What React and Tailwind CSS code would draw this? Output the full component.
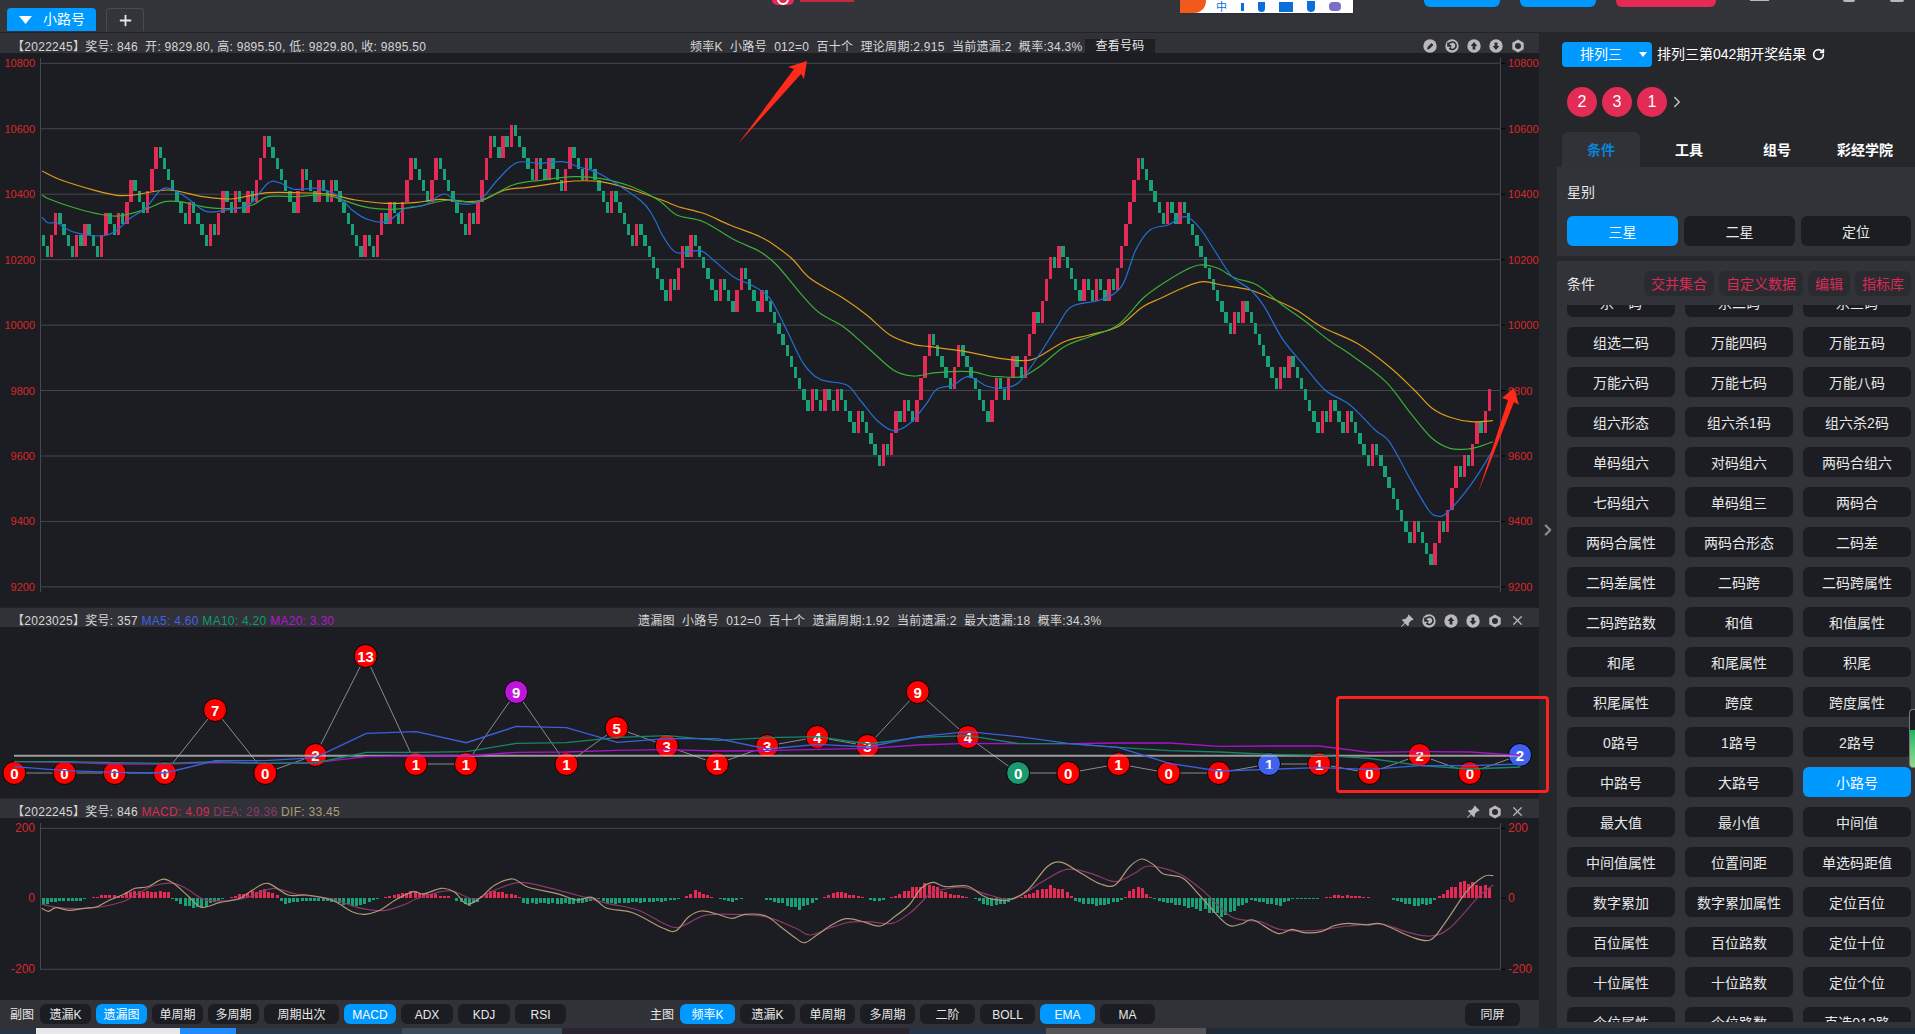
import { ChevronRight, Plus, RotateCw, X } from "lucide-react";
import { BsPinAngleFill } from "react-icons/bs";

// points were read off at different x scales, so every series gets rescaled to page coordinates
const toPage = (pts, sx, ox, oy) => pts.map(([x, y]) => [ox + x / sx, oy + y / 3]);

const PRICE_PATH = [
  ...toPage([[110,405],[118,478],[130,408],[145,345],[158,400],[178,482],[188,480],[205,385],[218,385],[225,450],[235,390],[245,388],[252,455],[270,325],[280,325],[298,428],[310,365],[322,295],[328,235],[340,235],[350,300],[360,240],[378,305],[385,238],[395,175],[410,145],[425,145],[443,245],[460,315],[480,380],[495,315],[520,450],[530,450],[548,320],[568,390],[580,290],[595,360],[610,262],[620,262],[640,330],[660,235],[668,170],[680,105],[690,105],[720,240],[745,340],[757,340],[775,245],[790,215],[805,215],[822,315],[838,250],[855,320],[870,255],[895,390],[920,458],[930,390],[945,460],[955,392],[972,430],[985,335],[1005,400],[1025,270],[1045,340],[1070,210],[1080,210],[1110,345],[1130,215],[1150,185],[1160,185],[1190,320],[1215,420],[1225,355],[1250,260],[1260,130],[1290,100],[1295,100],[1305,165],[1325,100],[1335,72],[1345,72],[1365,170],[1385,240],[1410,145],[1425,210],[1445,150],[1465,215],[1480,150],[1500,220],[1510,285],[1525,157],[1540,190],[1565,290]], 2.613, 0, 100),
  ...toPage([[130,60],[145,0],[185,0],[215,98],[220,35],[232,35],[275,205],[305,305],[320,238],[338,305],[360,178],[373,112],[388,112],[395,180],[407,115],[420,115],[430,180],[465,285],[472,220],[480,220],[515,355],[527,290],[535,225],[548,225],[582,360],[592,295],[605,295],[640,430],[690,600],[740,733],[745,670],[755,605],[765,605],[790,575],[800,545],[808,545],[820,610],[830,548],[840,548],[885,715],[895,650],[907,650],[950,820],[960,755],[975,755],[983,725],[1000,690],[1015,630],[1030,630],[1040,660],[1060,595],[1070,505],[1082,505],[1090,470],[1102,405],[1115,405],[1140,510],[1155,575],[1168,510],[1190,480],[1210,448],[1222,448],[1255,585],[1277,650],[1290,585],[1297,520],[1310,520],[1330,622],[1343,558],[1355,492],[1365,492],[1385,560],[1385,495],[1395,430],[1408,365],[1418,365],[1430,340],[1442,270],[1450,208],[1478,175],[1495,145]], 3, 560, 200),
  ...toPage([[168,355],[185,420],[205,520],[225,462],[235,460],[250,525],[255,462],[270,465],[283,530],[297,465],[325,470],[330,405],[345,275],[375,80],[388,80],[440,285],[458,315],[470,190],[480,190],[492,255],[503,190],[510,190],[560,390],[610,560],[635,625],[645,565],[665,532],[685,502],[692,502],[735,670],[770,805],[785,740],[800,710],[812,710],[850,875],[865,815],[875,815],[895,915],[905,850],[925,820],[937,820],[958,920],[965,855],[975,855],[1005,990],[1020,925],[1030,990],[1040,960],[1055,1025],[1070,965],[1085,1060],[1140,1265],[1160,1200],[1170,1200],[1200,1335],[1212,1335],[1222,1205],[1232,1140],[1250,1175],[1262,1050],[1272,985],[1280,1015],[1295,950],[1310,985],[1320,855],[1332,855],[1345,925],[1350,860],[1362,795],[1372,795],[1383,860]], 2.8, 1000, 130),
];

const MA_ORANGE = [
  ...toPage([[110,213],[160,240],[250,272],[305,286],[350,285],[440,270],[530,290],[600,297],[640,290],[700,278],[770,278],[860,283],[930,300],[1010,310],[1090,307],[1150,298],[1220,305],[1260,300],[1320,270],[1380,262],[1450,250],[1500,243],[1568,245]], 2.613, 0, 100),
  [630, 189],
  ...toPage([[305,0],[355,20],[430,40],[510,75],[600,110],[650,140],[700,180],[750,235],[850,295],[920,345],[990,405],[1060,433],[1110,440],[1200,452],[1290,470]], 3, 560, 200),
  ...toPage([[0,685],[60,692],[100,685],[180,635],[250,615],[330,590],[400,530],[450,505],[520,470],[570,455],[620,465],[700,480],[760,505],[830,540],[900,590],[1000,640],[1090,710],[1160,780],[1210,835],[1260,862],[1320,875],[1380,872]], 2.8, 1000, 130),
];
const MA_GREEN = [
  ...toPage([[110,285],[130,298],[190,322],[250,340],[310,348],[380,328],[430,305],[470,305],[540,322],[610,325],[660,315],[700,290],[770,290],[830,285],[870,290],[950,320],[1020,328],[1090,320],[1170,300],[1250,305],[1340,255],[1420,240],[1500,230],[1568,235]], 2.613, 0, 100),
  [630, 186],
  ...toPage([[295,0],[350,45],[430,65],[520,118],[600,155],[650,195],[730,290],[780,340],[850,380],[920,440],[1000,510],[1060,528],[1130,518],[1230,515],[1290,528]], 3, 560, 200),
  ...toPage([[0,740],[60,740],[110,710],[180,650],[250,620],[330,585],[400,505],[450,465],[520,420],[560,405],[610,415],[660,445],[720,465],[790,525],[850,570],[920,630],[990,680],[1080,755],[1150,850],[1210,925],[1260,955],[1310,957],[1350,947],[1380,935]], 2.8, 1000, 130),
];
const MA_BLUE = [
  ...toPage([[110,352],[125,368],[150,370],[190,395],[260,408],[300,395],[340,355],[380,325],[420,270],[450,268],[490,295],[540,335],[600,328],[650,315],[700,250],[730,248],[770,268],[830,265],[880,285],[920,330],[960,358],[1010,365],[1060,325],[1110,315],[1160,282],[1200,310],[1250,305],[1300,240],[1350,188],[1410,190],[1470,185],[1510,200],[1568,222]], 2.613, 0, 100),
  ...toPage([[240,0],[280,50],[310,110],[350,158],[420,152],[460,180],[520,230],[580,258],[630,295],[680,390],[730,490],[780,538],[860,555],[900,600],[950,660],[1000,692],[1050,670],[1100,610],[1130,568],[1180,555],[1225,530],[1280,558]], 3, 560, 200),
  ...toPage([[0,775],[50,760],[100,690],[160,590],[200,530],[280,510],[340,470],[380,360],[420,300],[470,285],[520,260],[560,295],[600,360],[650,440],[700,478],[740,530],[790,625],[850,705],[910,780],[980,825],[1050,900],[1090,935],[1150,1050],[1200,1140],[1225,1158],[1250,1150],[1300,1090],[1340,1030],[1380,960]], 2.8, 1000, 130),
];

const NODE_VALUES = [0,0,0,0,7,0,2,13,1,1,9,1,5,3,1,3,4,3,9,4,0,0,1,0,0,1,1,0,2,0,2];
const NODE_COLORS = { 10: "#c014dc", 20: "#1a9a6e", 25: "#4060f0", 30: "#4060f0" };
const LOSS_BLUE = [
  ...toPage([[28,500],[128,512],[226,517],[324,519],[422,482],[520,482],[618,473],[718,400],[816,395],[914,428],[1012,379],[1110,383],[1210,427],[1308,416],[1406,416],[1504,447]], 1.96, 0, 600),
  ...toPage([[36,433],[141,441],[244,410],[347,395],[451,410],[553,430],[656,442],[762,490],[865,513],[968,508],[1071,503],[1175,508],[1280,497],[1383,497],[1486,492]], 2.063, 800, 600),
];
const LOSS_GREEN = [
  ...toPage([[28,485],[128,485],[226,488],[324,490],[422,485],[520,490],[618,489],[718,457],[816,457],[914,455],[1012,430],[1110,428],[1210,412],[1308,407],[1406,421],[1504,413]], 1.96, 0, 600),
  ...toPage([[36,410],[141,432],[244,412],[347,407],[451,431],[553,431],[656,442],[762,452],[865,456],[968,463],[1071,466],[1175,475],[1280,497],[1383,507],[1486,501]], 2.063, 800, 600),
];
const LOSS_PURPLE = [
  ...toPage([[28,485],[128,487],[226,492],[324,492],[422,488],[520,490],[618,488],[718,470],[816,468],[914,468],[1012,457],[1110,456],[1210,451],[1308,449],[1406,453],[1504,452]], 1.96, 0, 600),
  ...toPage([[36,448],[141,445],[244,435],[347,430],[451,431],[553,431],[656,429],[762,429],[865,439],[968,438],[1071,438],[1175,457],[1280,455],[1383,456],[1486,466]], 2.063, 800, 600),
];

const DIF = [
  ...toPage([[82,325],[95,334],[110,323],[135,331],[165,325],[190,320],[215,300],[240,285],[265,265],[290,260],[318,238],[340,250],[370,290],[395,322],[430,308],[470,295],[495,270],[525,250],[565,285],[600,285],[650,300],[690,335],[715,343],[745,330],[775,300],[810,275],[830,282],[865,265],[890,275],[915,312],[940,295],[970,255],[1005,237],[1035,262],[1090,280],[1130,300],[1160,292],[1190,325],[1240,338],[1300,385],[1325,392],[1350,350],[1375,333],[1405,342],[1435,355],[1460,343],[1500,347],[1530,380],[1560,415]], 1.96, 0, 800),
  ...toPage([[10,428],[35,405],[65,375],[95,356],[125,363],[165,378],[195,350],[225,315],[250,265],[275,247],[300,260],[345,258],[375,285],[395,297],[430,300],[470,270],[510,200],[540,187],[580,220],[620,252],[650,255],[680,200],[705,177],[730,195],[750,222],[790,235],[830,295],[880,372],[910,372],[935,360],[985,400],[1015,388],[1040,398],[1075,395],[1100,378],[1130,370],[1170,375],[1200,372],[1260,410],[1300,420],[1330,370],[1375,275],[1410,230],[1430,227]], 2.063, 800, 800),
];
const DEA = [
  ...toPage([[82,312],[110,322],[150,326],[190,322],[240,305],[265,285],[300,258],[340,250],[370,270],[400,298],[450,302],[490,290],[535,265],[580,282],[650,297],[700,322],[750,332],[790,315],[820,295],[880,272],[930,298],[970,270],[1020,247],[1080,265],[1130,285],[1190,310],[1250,330],[1300,370],[1330,382],[1380,347],[1430,343],[1500,350],[1560,385]], 1.96, 0, 800),
  ...toPage([[20,405],[60,385],[100,367],[140,365],[190,370],[230,335],[270,280],[300,267],[340,262],[390,285],[440,297],[500,245],[550,208],[600,220],[650,245],[690,220],[720,198],[780,220],[830,270],[890,350],[950,365],[990,388],[1060,392],[1130,378],[1200,372],[1250,395],[1300,408],[1340,385],[1400,290],[1430,255]], 2.063, 800, 800),
];
const MACD_ENVELOPE = [
  ...[[80,-20],[110,-8],[150,-8],[170,0],[210,12],[235,5],[250,20],[330,18],[335,-2],[365,-25],[395,-25],[430,-3],[460,8],[515,25],[545,5],[550,-15],[600,-8],[640,-8],[680,-20],[700,-22],[740,0],[770,10],[800,20],[880,5],[890,-5],[915,-22],[935,-8],[945,15],[970,22],[1015,5],[1025,-15],[1100,-15],[1130,-15],[1170,-3],[1190,-15],[1300,-8],[1335,0],[1360,22],[1395,3],[1430,-10],[1460,3],[1490,0],[1530,-15],[1560,-30]].map(([x, h]) => [x / 1.96, h / 3]),
  ...[[0,-28],[25,-10],[40,0],[75,20],[105,10],[130,2],[150,-10],[185,2],[230,30],[265,42],[300,15],[340,3],[355,0],[385,-22],[420,-15],[440,0],[465,10],[515,35],[550,20],[560,0],[570,-12],[620,-22],[665,-3],[675,18],[695,35],[720,5],[735,-8],[800,-25],[875,-50],[910,-18],[930,-5],[985,-22],[1010,-3],[1060,-3],[1075,0],[1100,8],[1140,8],[1180,0],[1210,0],[1260,-22],[1300,-15],[1310,0],[1340,30],[1365,48],[1430,28]].map(([x, h]) => [800 + x / 2.063, h / 3]),
];

const BAR_STEP = 4.18;
const BAR_COUNT = 347;

function interp(pts, x) {
  if (x <= pts[0][0]) return pts[0][1];
  for (let i = 1; i < pts.length; i++) {
    if (x <= pts[i][0]) {
      const [x0, y0] = pts[i - 1];
      const [x1, y1] = pts[i];
      return x1 === x0 ? y1 : y0 + ((y1 - y0) * (x - x0)) / (x1 - x0);
    }
  }
  return pts[pts.length - 1][1];
}

// catmull-rom through the points
function smooth(pts) {
  let d = `M${pts[0][0].toFixed(1)} ${pts[0][1].toFixed(1)}`;
  for (let i = 0; i < pts.length - 1; i++) {
    const p0 = pts[Math.max(i - 1, 0)];
    const p1 = pts[i];
    const p2 = pts[i + 1];
    const p3 = pts[Math.min(i + 2, pts.length - 1)];
    const c1x = p1[0] + (p2[0] - p0[0]) / 6;
    const c1y = p1[1] + (p2[1] - p0[1]) / 6;
    const c2x = p2[0] - (p3[0] - p1[0]) / 6;
    const c2y = p2[1] - (p3[1] - p1[1]) / 6;
    d += `C${c1x.toFixed(1)} ${c1y.toFixed(1)} ${c2x.toFixed(1)} ${c2y.toFixed(1)} ${p2[0].toFixed(1)} ${p2[1].toFixed(1)}`;
  }
  return d;
}

// hit = +2 (red), miss = -1 (green), steered along the price path
function buildCandles() {
  const out = [];
  let y = 235;
  for (let i = 0; i < BAR_COUNT; i++) {
    const x = 41.5 + i * BAR_STEP;
    const target = interp(PRICE_PATH, x + 1);
    if (y - target > 9) {
      out.push({ x, y: y - 22, h: 22, up: true });
      y -= 22;
    } else {
      out.push({ x, y, h: 11, up: false });
      y += 11;
    }
  }
  return out;
}

const priceY = (v) => 63.3 + ((10800 - v) / 200) * 65.45;
const PRICE_TICKS = [10800, 10600, 10400, 10200, 10000, 9800, 9600, 9400, 9200];

const CONDITIONS = [
  ["杀一码", "杀二码", "杀三码"],
  ["组选二码", "万能四码", "万能五码"],
  ["万能六码", "万能七码", "万能八码"],
  ["组六形态", "组六杀1码", "组六杀2码"],
  ["单码组六", "对码组六", "两码合组六"],
  ["七码组六", "单码组三", "两码合"],
  ["两码合属性", "两码合形态", "二码差"],
  ["二码差属性", "二码跨", "二码跨属性"],
  ["二码跨路数", "和值", "和值属性"],
  ["和尾", "和尾属性", "积尾"],
  ["积尾属性", "跨度", "跨度属性"],
  ["0路号", "1路号", "2路号"],
  ["中路号", "大路号", "小路号"],
  ["最大值", "最小值", "中间值"],
  ["中间值属性", "位置间距", "单选码距值"],
  ["数字累加", "数字累加属性", "定位百位"],
  ["百位属性", "百位路数", "定位十位"],
  ["十位属性", "十位路数", "定位个位"],
  ["个位属性", "个位路数", "直选012路"],
].flat();

function RoundIcon({ kind }) {
  const glyph = {
    edit: <path d="M4 10.5l.6-2.4 4-4 1.8 1.8-4 4z" fill="#2a2b30" />,
    back: <path d="M3.5 6.5a3.8 3.8 0 1 1 1.4 3.2l1-1.2 M3 3.5v3.4h3.4" fill="none" stroke="#2a2b30" strokeWidth="1.6" />,
    up: <path d="M7 3l3.4 4H8.4v3.6H5.6V7H3.6z" fill="#2a2b30" />,
    down: <path d="M7 11L3.6 7h2V3.4h2.8V7h2z" fill="#2a2b30" />,
  }[kind];
  if (kind === "nut") {
    return (
      <svg width="14" height="14" viewBox="0 0 14 14">
        <path d="M7 .5l5.7 3.2v6.6L7 13.5 1.3 10.3V3.7z" fill="#b9b9b9" />
        <circle cx="7" cy="7" r="3" fill="#2a2b30" />
      </svg>
    );
  }
  return (
    <svg width="14" height="14" viewBox="0 0 14 14">
      <circle cx="7" cy="7" r="6.7" fill="#b9b9b9" />
      {glyph}
    </svg>
  );
}

function PanelHeader({ children, icons, close, tall }) {
  return (
    <div className={`flex items-center flex-none border-t border-[#222327] bg-[#313237] pt-[6px] pr-[14px] text-[12px] leading-[14px] tracking-[0.28px] text-[#d6d6d6] ${tall ? "h-[21px]" : "h-[20px]"}`}>
      {children}
      <div className="ml-auto flex items-center gap-[8px]">
        {icons.map((k) =>
          k === "pin" ? (
            <BsPinAngleFill key={k} className="text-[#b9b9b9]" size={14} />
          ) : (
            <RoundIcon key={k} kind={k} />
          )
        )}
        {close && <X className="text-[#b9b9b9]" size={15} strokeWidth={2} />}
      </div>
    </div>
  );
}

function ToolButton({ label, active, className }) {
  return (
    <div className={`flex h-[20px] items-center justify-center rounded-md pt-[2px] text-[12px] text-[#e8e8e8] ${active ? "bg-[#0099ff] text-white" : "bg-[#1c1d22]"} ${className}`}>
      {label}
    </div>
  );
}

function PriceChart() {
  const candles = buildCandles();
  return (
    <svg className="block flex-none" width="1539" height="554" viewBox="0 53 1539 554">
      {PRICE_TICKS.map((v) => (
        <g key={v}>
          <line x1="41" x2="1501" y1={priceY(v)} y2={priceY(v)} stroke="#47484d" />
          <line x1="1501" x2="1505" y1={priceY(v)} y2={priceY(v)} stroke="#000" />
          <text x="35" y={priceY(v) + 4} textAnchor="end" fontSize="11" fill="#d8282a">{v}</text>
          <text x="1508" y={priceY(v) + 4} fontSize="11" fill="#d8282a">{v}</text>
        </g>
      ))}
      <line x1="40.5" x2="40.5" y1="58" y2="592" stroke="#47484d" />
      <line x1="1500.5" x2="1500.5" y1="58" y2="592" stroke="#47484d" />
      {candles.map((c, i) => (
        <rect key={i} x={c.x} y={c.y} width="3.4" height={c.h} fill={c.up ? "#e42a55" : "#18a177"} shapeRendering="crispEdges" />
      ))}
      <path d={smooth(MA_ORANGE)} fill="none" stroke="#dc9c1c" strokeWidth="1.2" />
      <path d={smooth(MA_GREEN)} fill="none" stroke="#3aaf36" strokeWidth="1.2" />
      <path d={smooth(MA_BLUE)} fill="none" stroke="#2070d8" strokeWidth="1.2" />
    </svg>
  );
}

function LossChart() {
  const nodes = NODE_VALUES.map((v, i) => ({
    v,
    x: 14.3 + i * 50.19,
    y: 773 - v * 9,
    fill: NODE_COLORS[i] || "#ff0000",
  }));
  return (
    <svg className="block flex-none" width="1539" height="171" viewBox="0 627 1539 171">
      <polyline points={nodes.map((n) => `${n.x},${n.y}`).join(" ")} fill="none" stroke="#8b8b8b" />
      {nodes.map((n, i) => (
        <g key={i}>
          <circle cx={n.x} cy={n.y} r="11.5" fill={n.fill} stroke="#000" />
          <text x={n.x} y={n.y + 5.5} textAnchor="middle" fontSize="15" fontWeight="700" fill="#fff">{n.v}</text>
        </g>
      ))}
      <line x1="14" x2="1520" y1="755.7" y2="755.7" stroke="#bdbdbd" strokeWidth="2" strokeOpacity="0.8" />
      <polyline points={LOSS_PURPLE.map((p) => p.join(",")).join(" ")} fill="none" stroke="#a813c8" strokeWidth="1.4" />
      <polyline points={LOSS_GREEN.map((p) => p.join(",")).join(" ")} fill="none" stroke="#14876a" strokeWidth="1.4" />
      <polyline points={LOSS_BLUE.map((p) => p.join(",")).join(" ")} fill="none" stroke="#3a60e0" strokeWidth="1.4" />
    </svg>
  );
}

function MacdChart() {
  const bars = [];
  for (let i = 0; i < BAR_COUNT; i++) {
    const x = 41.5 + i * BAR_STEP;
    const h = interp(MACD_ENVELOPE, x) * (1.05 + 0.12 * Math.sin(i * 2.3));
    if (Math.abs(h) >= 0.5) bars.push({ x, h });
  }
  return (
    <svg className="block flex-none" width="1539" height="182" viewBox="0 818 1539 182">
      {[[200, 828.3], [0, 898.3], [-200, 969.3]].map(([v, y]) => (
        <g key={v}>
          {v !== 0 && <line x1="41" x2="1501" y1={y} y2={y} stroke="#47484d" />}
          <line x1="1501" x2="1505" y1={y} y2={y} stroke="#000" />
          <text x="35" y={y + 4} textAnchor="end" fontSize="12" fill="#d8282a">{v}</text>
          <text x="1508" y={y + 4} fontSize="12" fill="#d8282a">{v}</text>
        </g>
      ))}
      <line x1="40.5" x2="40.5" y1="823" y2="970" stroke="#47484d" />
      <line x1="1500.5" x2="1500.5" y1="823" y2="970" stroke="#47484d" />
      {bars.map((b, i) => (
        <rect key={i} x={b.x} y={b.h > 0 ? 898.3 - b.h : 898.3} width="3" height={Math.abs(b.h)} fill={b.h > 0 ? "#e42a55" : "#18a177"} shapeRendering="crispEdges" />
      ))}
      <path d={smooth(DEA)} fill="none" stroke="#8a3a68" strokeWidth="1.2" />
      <path d={smooth(DIF)} fill="none" stroke="#b09a78" strokeWidth="1.2" />
    </svg>
  );
}

function TopBar() {
  return (
    <div className="flex h-[32px] flex-none flex-col bg-[#34353a]">
      {/* things cut off by the screenshot's top edge */}
      <div className="flex h-[8px] flex-none items-start">
        <div className="ml-[772px] flex h-[5px] w-[22px] items-end justify-center rounded-b-md bg-[#e42a55]">
          <div className="h-[6px] w-[12px] rounded-b-full border-2 border-t-0 border-white" />
        </div>
        <div className="ml-[6px] h-[2px] w-[54px] bg-[#c8283f]" />
        <div className="ml-[326px] flex h-[13px] w-[173px] items-center overflow-hidden bg-white shadow-sm">
          <div className="h-[13px] w-[26px] rounded-br-xl bg-[#f25a1d]" />
          <span className="ml-[10px] text-[11px] leading-[12px] text-[#0a6fd8]">中</span>
          <div className="ml-[14px] h-[8px] w-[3px] bg-[#0a6fd8]" />
          <div className="ml-[14px] h-[10px] w-[7px] rounded-b-full bg-[#0a6fd8]" />
          <div className="ml-[14px] h-[10px] w-[14px] bg-[#0a6fd8]" />
          <div className="ml-[14px] h-[11px] w-[8px] rounded-b bg-[#0a6fd8]" />
          <div className="ml-[14px] h-[9px] w-[12px] rounded-sm bg-[#7a6fc8]" />
        </div>
        <div className="ml-[71px] h-[7px] w-[76px] rounded-b-md bg-[#0099ff]" />
        <div className="ml-[20px] h-[7px] w-[76px] rounded-b-md bg-[#0099ff]" />
        <div className="ml-[20px] h-[7px] w-[100px] rounded-b-md bg-[#e42a55]" />
        <div className="ml-[34px] h-[1px] w-[19px] bg-[#b9b9b9]" />
        <div className="ml-[74px] h-[2px] w-[12px] rounded-b bg-[#b9b9b9]" />
        <div className="ml-[35px] h-[2px] w-[14px] rounded-b-full bg-[#b9b9b9]" />
      </div>
      <div className="flex items-center pl-[7px]">
        <div className="flex h-[23px] w-[89px] items-center rounded-t bg-[#0099ff] pl-[12px] text-[14px] text-white">
          <svg width="13" height="8" viewBox="0 0 13 8"><path d="M0 0h13L6.5 8z" fill="#fff" /></svg>
          <span className="ml-[11px]">小路号</span>
        </div>
        <div className="ml-[10px] flex h-[23px] w-[38px] items-center justify-center rounded-t border border-b-0 border-[#4a4b50]">
          <Plus className="text-[#e8e8e8]" size={17} strokeWidth={2.5} />
        </div>
      </div>
    </div>
  );
}

function MainColumn() {
  return (
    <div className="flex w-[1539px] flex-none flex-col bg-[#1c1d22]">
      <PanelHeader tall icons={["edit", "back", "up", "down", "nut"]}>
        <span className="mt-[2px] w-[690px] flex-none pl-[12px] whitespace-pre">【2022245】奖号: 846  开: 9829.80, 高: 9895.50, 低: 9829.80, 收: 9895.50</span>
        <span className="mt-[2px] w-[395px] flex-none whitespace-pre">频率K  小路号  012=0  百十个  理论周期:2.915  当前遗漏:2  概率:34.3%</span>
        <span className="flex h-[14px] w-[70px] flex-none items-center justify-center bg-[#1f2025] text-[#e8e8e8]">查看号码</span>
      </PanelHeader>
      <PriceChart />
      <PanelHeader icons={["pin", "back", "up", "down", "nut"]} close>
        <span className="w-[638px] flex-none pl-[12px] whitespace-pre">
          【2023025】奖号: 357 <span className="text-[#3f62e0]">MA5: 4.60</span> <span className="text-[#0f9b6e]">MA10: 4.20</span> <span className="text-[#b514d4]">MA20: 3.30</span>
        </span>
        <span className="whitespace-pre">遗漏图  小路号  012=0  百十个  遗漏周期:1.92  当前遗漏:2  最大遗漏:18  概率:34.3%</span>
      </PanelHeader>
      <LossChart />
      <PanelHeader icons={["pin", "nut"]} close>
        <span className="pl-[12px] whitespace-pre">
          【2022245】奖号: 846 <span className="text-[#d92a55]">MACD: 4.09</span> <span className="text-[#8a3a68]">DEA: 29.36</span> <span className="text-[#b09a78]">DIF: 33.45</span>
        </span>
      </PanelHeader>
      <MacdChart />
      <div className="flex h-[28px] flex-none items-center gap-[5px] bg-[#313237] pl-[10px] text-[12px] text-[#e8e8e8]">
        <span className="w-[25px] pt-[2px]">副图</span>
        <ToolButton label="遗漏K" className="w-[51px]" />
        <ToolButton label="遗漏图" active className="w-[51px]" />
        <ToolButton label="单周期" className="w-[51px]" />
        <ToolButton label="多周期" className="w-[51px]" />
        <ToolButton label="周期出次" className="w-[75px]" />
        <ToolButton label="MACD" active className="w-[52px]" />
        <ToolButton label="ADX" className="w-[52px]" />
        <ToolButton label="KDJ" className="w-[52px]" />
        <ToolButton label="RSI" className="w-[51px]" />
        <span className="ml-[79px] w-[25px] pt-[2px]">主图</span>
        <ToolButton label="频率K" active className="w-[55px]" />
        <ToolButton label="遗漏K" className="w-[55px]" />
        <ToolButton label="单周期" className="w-[55px]" />
        <ToolButton label="多周期" className="w-[55px]" />
        <ToolButton label="二阶" className="w-[55px]" />
        <ToolButton label="BOLL" className="w-[55px]" />
        <ToolButton label="EMA" active className="w-[55px]" />
        <ToolButton label="MA" className="w-[55px]" />
        <ToolButton label="同屏" className="ml-[305px] !h-[23px] w-[55px]" />
      </div>
    </div>
  );
}

function SidePanel() {
  return (
    <div className="relative flex w-[358px] flex-none flex-col bg-[#323338] text-[14px] text-[#e8e8e8]">
      <div className="h-[135px] flex-none bg-[#26272b]">
        <div className="flex items-center pt-[10px] pl-[5px]">
          <div className="relative flex h-[25px] w-[90px] items-center justify-center rounded bg-[#0099ff] pr-[12px] text-white">
            排列三
            <svg className="absolute right-[5px]" width="8" height="5" viewBox="0 0 8 5"><path d="M0 0h8L4 5z" fill="#fff" /></svg>
          </div>
          <span className="ml-[5px] text-white">排列三第042期开奖结果</span>
          <RotateCw className="ml-[6px] text-white" size={13} strokeWidth={3} />
        </div>
        <div className="mt-[20px] flex items-center gap-[5px] pl-[10px]">
          {[2, 3, 1].map((n, i) => (
            <div key={i} className="flex h-[30px] w-[30px] items-center justify-center rounded-full bg-[#e22b55] text-[16px] text-white">{n}</div>
          ))}
          <ChevronRight className="-ml-[4px] text-[#c4c4c4]" size={18} strokeWidth={2} />
        </div>
        <div className="mt-[15px] flex h-[35px] font-semibold text-white">
          <div className="flex w-[88px] justify-center">
            <div className="flex w-[78px] items-center justify-center rounded-t-md bg-[#313237] pt-[2px] text-[#0a84d8]">条件</div>
          </div>
          <div className="flex w-[88px] items-center justify-center pt-[2px]">工具</div>
          <div className="flex w-[88px] items-center justify-center pt-[2px]">组号</div>
          <div className="flex w-[88px] items-center justify-center pt-[2px]">彩经学院</div>
        </div>
      </div>
      <div className="h-[89px] flex-none pt-[16px] pl-[10px]">
        <div className="leading-[18px]">星别</div>
        <div className="mt-[15px] flex gap-[6px]">
          <div className="flex h-[30px] w-[111px] items-center justify-center rounded-md bg-[#0099ff] pt-[2px] text-white">三星</div>
          <div className="flex h-[30px] w-[111px] items-center justify-center rounded-md bg-[#1c1d22] pt-[2px]">二星</div>
          <div className="flex h-[30px] w-[110px] items-center justify-center rounded-md bg-[#1c1d22] pt-[2px]">定位</div>
        </div>
      </div>
      <div className="h-[5px] flex-none bg-[#26272b]" />
      <div className="flex-1 pt-[10px] pl-[10px]">
        <div className="flex h-[25px] items-center">
          <span className="pt-[2px]">条件</span>
          <div className="ml-[49px] flex gap-[5px] text-[#d92a55]">
            <div className="flex h-[25px] w-[70px] items-center justify-center rounded-md bg-[#2a2b30] pt-[2px]">交并集合</div>
            <div className="flex h-[25px] w-[84px] items-center justify-center rounded-md bg-[#2a2b30] pt-[2px]">自定义数据</div>
            <div className="flex h-[25px] w-[42px] items-center justify-center rounded-md bg-[#2a2b30] pt-[2px]">编辑</div>
            <div className="flex h-[25px] w-[56px] items-center justify-center rounded-md bg-[#2a2b30] pt-[2px]">指标库</div>
          </div>
        </div>
        <div className="mt-[9px] h-[717px] overflow-hidden">
          <div className="-mt-[18px] grid w-[344px] grid-cols-3 gap-[10px]">
            {CONDITIONS.map((name) => (
              <div key={name} className={`flex h-[30px] items-center justify-center rounded-md pt-[2px] ${name === "小路号" ? "bg-[#0099ff] text-white" : "bg-[#1c1d22]"}`}>
                {name}
              </div>
            ))}
          </div>
        </div>
      </div>
      {/* scrollbar of another window peeking in */}
      <div className="absolute top-[677px] right-0 h-[59px] w-[6px] rounded-l border border-r-0 border-[#777] bg-gradient-to-b from-[#1c1d22] from-35% via-[#17b468] via-35% to-[#8fdc8f]" />
    </div>
  );
}

export default function App() {
  return (
    <div className="relative flex h-[1034px] w-[1915px] flex-col overflow-hidden bg-[#26272b] font-['Liberation_Sans','Noto_Sans_CJK_SC',sans-serif]">
      <TopBar />
      <div className="flex h-[996px] flex-none">
        <MainColumn />
        <div className="flex w-[18px] flex-none items-center justify-center bg-[#26272b]">
          <ChevronRight className="text-[#8e8e8e]" size={20} strokeWidth={3} />
        </div>
        <SidePanel />
      </div>
      <div className="flex h-[6px] flex-none">
        <div className="w-[36px] bg-[#2a3440]" />
        <div className="w-[144px] bg-[#e8e8e8]" />
        <div className="w-[56px] bg-[#1e8cff]" />
        <div className="w-[166px] bg-[#2b3a4a]" />
        <div className="w-[160px] bg-[#3f4b58]" />
        <div className="w-[347px] bg-[#2a2530]" />
        <div className="w-[137px] bg-[#26344a]" />
        <div className="w-[160px] bg-[#555558]" />
        <div className="flex-1 bg-[#1f2c38]" />
      </div>
      {/* annotations drawn on top of the screenshot */}
      <svg className="pointer-events-none absolute inset-0" width="1915" height="1034">
        <path d="M738 144L794 69 788 67 807 61 804 79 801 74z" fill="#ff2a1a" />
        <path d="M1478 493L1508 400 1502 398 1514 388 1519 405 1514 402z" fill="#ff2a1a" />
      </svg>
      <div className="pointer-events-none absolute top-[696px] left-[1336px] h-[97px] w-[213px] rounded-sm border-[3px] border-[#ff2020]" />
    </div>
  );
}
